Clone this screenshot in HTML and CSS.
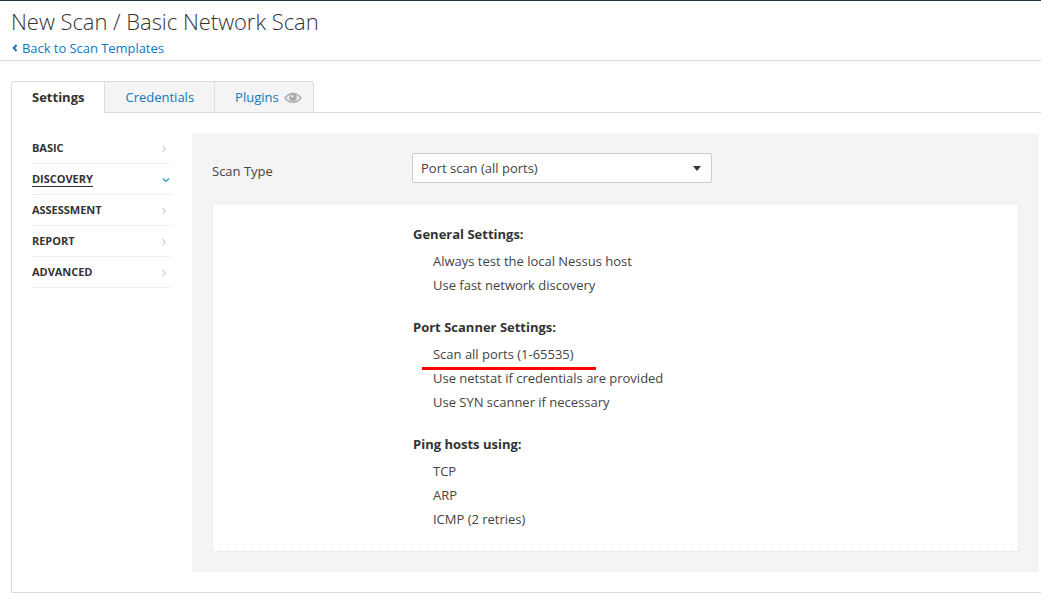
FILE: index.html
```html
<!DOCTYPE html>
<html lang="en">
<head>
<meta charset="utf-8">
<title>New Scan / Basic Network Scan</title>
<link rel="stylesheet" href="styles.css">
</head>
<body>
<header class="header">
  <h1 class="title">New Scan / Basic Network Scan</h1>
  <a class="back"><svg class="back-icon" width="6" height="8" viewBox="0 0 6 8"><path d="M4.500 1 1.800 4l2.700 3"/></svg>Back to Scan Templates</a>
</header>
<nav class="tabs">
  <a class="tab active">Settings</a>
  <a class="tab">Credentials</a>
  <a class="tab plugins">Plugins<svg class="eye" width="18" height="12" viewBox="0 0 18 12"><path d="M1 6Q4.500 1.500 9 1.500T17 6Q13.500 10.300 9 10.300T1 6Z"/><circle class="iris" cx="9" cy="5.600" r="3.800"/><circle class="glint" cx="8.300" cy="4.200" r="1.200"/></svg></a>
</nav>
<main class="panel">
  <ul class="side">
    <li class="item"><span>BASIC</span><svg class="chev" width="6" height="8" viewBox="0 0 6 8"><path d="M1.300 1 4.300 4 1.300 7"/></svg></li>
    <li class="item open"><span>DISCOVERY</span><svg class="chev" width="8" height="6" viewBox="0 0 8 6"><path d="M1 1.500 4 4.200 7 1.500"/></svg></li>
    <li class="item"><span>ASSESSMENT</span><svg class="chev" width="6" height="8" viewBox="0 0 6 8"><path d="M1.300 1 4.300 4 1.300 7"/></svg></li>
    <li class="item"><span>REPORT</span><svg class="chev" width="6" height="8" viewBox="0 0 6 8"><path d="M1.300 1 4.300 4 1.300 7"/></svg></li>
    <li class="item"><span>ADVANCED</span><svg class="chev" width="6" height="8" viewBox="0 0 6 8"><path d="M1.300 1 4.300 4 1.300 7"/></svg></li>
  </ul>
  <section class="content">
    <div class="field">
      <span class="label">Scan Type</span>
      <div class="select"><span>Port scan (all ports)</span><i class="caret"></i></div>
    </div>
    <div class="summary">
      <h2>General Settings:</h2>
      <ul><li>Always test the local Nessus host</li><li>Use fast network discovery</li></ul>
      <h2>Port Scanner Settings:</h2>
      <ul><li class="marked">Scan all ports (1-65535)</li><li>Use netstat if credentials are provided</li><li>Use SYN scanner if necessary</li></ul>
      <h2>Ping hosts using:</h2>
      <ul><li>TCP</li><li>ARP</li><li>ICMP (2 retries)</li></ul>
    </div>
  </section>
</main>
</body>
</html>
```
FILE: styles.css
```css
* { box-sizing: border-box; }
body { margin: 0; height: 601px; overflow: hidden; background: #fff; border-top: 1px solid #263645; color: #444; font: 13px/24px "Open Sans", sans-serif; }
ul { list-style: none; margin: 0; padding: 0; }
.header { height: 60px; padding: 4px 0 0 11px; border-bottom: 1px solid #ddd; }
.title { margin: 0 0 1px; color: #333; font-size: 22px; line-height: 32px; font-weight: 300; letter-spacing: -.03px; }
.back { display: flex; align-items: center; height: 20px; color: #0e78c0; letter-spacing: -.05px; }
.back-icon { margin: 0 4px 0 1px; fill: none; stroke: #0e78c0; stroke-width: 2; }
.tabs { display: flex; height: 52px; margin-left: 11px; padding-top: 20px; border-bottom: 1px solid #ddd; }
.tab { display: flex; align-items: center; height: 31px; padding: 0 20px; background: #f4f4f4; border: solid #ddd; border-width: 1px 1px 0 0; color: #0e78c0; }
.active { height: 32px; padding-bottom: 1px; background: #fff; border-left-width: 1px; border-radius: 3px 0 0; color: #333; font-weight: 700; }
.plugins { padding-right: 11px; border-radius: 0 3px 0 0; }
.eye { margin: 1px 0 0 5px; fill: none; stroke: #aaa; stroke-width: 1.300; }
.iris { fill: #aaa; stroke: none; }
.glint { fill: #eee; stroke: none; }
.panel { display: flex; height: 480px; margin-left: 11px; padding: 20px 2px 0 20px; border: solid #ddd; border-width: 0 0 1px 1px; }
.side { width: 140px; margin-right: 20px; }
.item { display: flex; align-items: center; justify-content: space-between; height: 31px; padding-right: 5px; border-bottom: 1px dotted #e4e4e4; color: #333; font-size: 11px; line-height: 14px; font-weight: 700; letter-spacing: -.03px; }
.chev { margin-top: 2px; fill: none; stroke: #d4d4d4; stroke-width: 1.200; }
.open { padding-right: 2px; }
.open span { border-bottom: 1px solid #333; }
.open .chev { stroke: #3aa3bd; stroke-width: 1.400; }
.content { flex: 1; height: 439px; padding: 20px; background: #f4f4f4; }
.field { display: flex; height: 50px; }
.label { width: 200px; padding-top: 6px; }
.select { display: flex; align-items: center; justify-content: space-between; width: 300px; height: 30px; padding: 0 10px 0 8px; background: #fff; border: 1px solid #ccc; border-radius: 2px; }
.caret { border: solid transparent; border-width: 5px 4.500px 0; border-top-color: #333; }
.summary { height: 349px; padding: 20px 0 0 200px; background: #fff; border: 1px dotted #ddd; }
.summary h2 { margin: 0; color: #333; font-size: 13px; line-height: 20px; }
.summary ul { padding: 5px 0 19px 20px; }
.summary li { letter-spacing: -.01px; }
.summary ul + h2 { margin-top: 1px; }
.marked { position: relative; }
.marked::after { content: ""; position: absolute; left: -11px; top: 25px; width: 174px; height: 3px; background: #f00; }
```
